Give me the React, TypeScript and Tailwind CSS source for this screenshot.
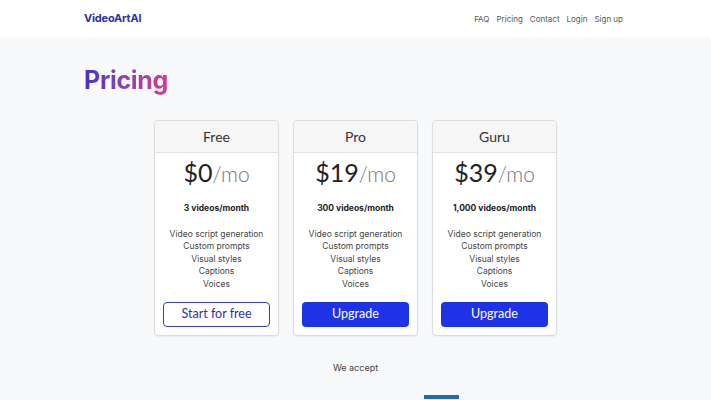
import React from "react";

const plans = [
  { name: "Free", price: "$0", videos: "3 videos/month", cta: "Start for free", primary: false },
  { name: "Pro", price: "$19", videos: "300 videos/month", cta: "Upgrade", primary: true },
  { name: "Guru", price: "$39", videos: "1,000 videos/month", cta: "Upgrade", primary: true },
];

const features = ["Video script generation", "Custom prompts", "Visual styles", "Captions", "Voices"];

export default function App() {
  return (
    <div className="min-h-[400px] bg-[#f8f9fb] overflow-hidden" style={{ fontFamily: "Inter, 'Noto Sans', sans-serif" }}>
      <header className="bg-white h-[37px]">
        <div className="w-[539px] ml-[84px] h-full flex items-center justify-between">
          <div className="text-[11px] font-bold text-[#2d31a8] tracking-[-0.2px]">VideoArtAI</div>
          <nav className="flex gap-[7px] text-[8px] text-[#555]">
            <span>FAQ</span>
            <span>Pricing</span>
            <span>Contact</span>
            <span>Login</span>
            <span>Sign up</span>
          </nav>
        </div>
      </header>
      <main className="w-[543px] mx-auto pt-[27px]">
        <h1 className="text-[25px] leading-[32px] font-bold bg-gradient-to-r from-[#4a2fc8] to-[#d4378a] bg-clip-text text-transparent w-fit tracking-[-0.3px]">
          Pricing
        </h1>
        <div className="flex justify-center gap-[14px] mt-[24px]">
          {plans.map((p) => (
            <div key={p.name} className="w-[125px] h-[216px] bg-white border border-[#dcdcdc] rounded-[4px] shadow-[0_1px_2px_rgba(0,0,0,0.06)] flex flex-col">
              <div className="h-[32px] bg-[#f6f6f6] border-b border-[#e2e2e2] rounded-t-[4px] flex items-center justify-center text-[14px] text-[#333]" style={{ fontFamily: "Lato, sans-serif" }}>
                {p.name}
              </div>
              <div className="flex items-baseline justify-center mt-[1px] h-[30px]" style={{ fontFamily: "Lato, sans-serif" }}>
                <span className="text-[25px] text-[#222]">{p.price}</span>
                <span className="text-[21px] font-light text-[#777]">/mo</span>
              </div>
              <div className="text-center text-[8.5px] font-bold text-[#222] mt-[18px]">{p.videos}</div>
              <ul className="text-center text-[8.5px] leading-[12.5px] text-[#444] mt-[13px]">
                {features.map((f) => (
                  <li key={f}>{f}</li>
                ))}
              </ul>
              <div className="px-[8px] mt-[10px]">
                {p.primary ? (
                  <button className="w-full h-[25px] rounded-[4px] bg-[#1f33e6] text-white text-[12.5px]" style={{ fontFamily: "Lato, sans-serif" }}>{p.cta}</button>
                ) : (
                  <button className="w-full h-[25px] rounded-[4px] border border-[#3a40b0] text-[#2d31a8] text-[12.5px] bg-white" style={{ fontFamily: "Lato, sans-serif" }}>{p.cta}</button>
                )}
              </div>
            </div>
          ))}
        </div>
        <div className="text-center text-[9px] text-[#444] mt-[25px]">We accept</div>
        <div className="flex justify-center mt-[20px] pl-[172px]">
          <div className="w-[35px] h-[4px] bg-[#1e6cb8]" />
        </div>
      </main>
    </div>
  );
}
